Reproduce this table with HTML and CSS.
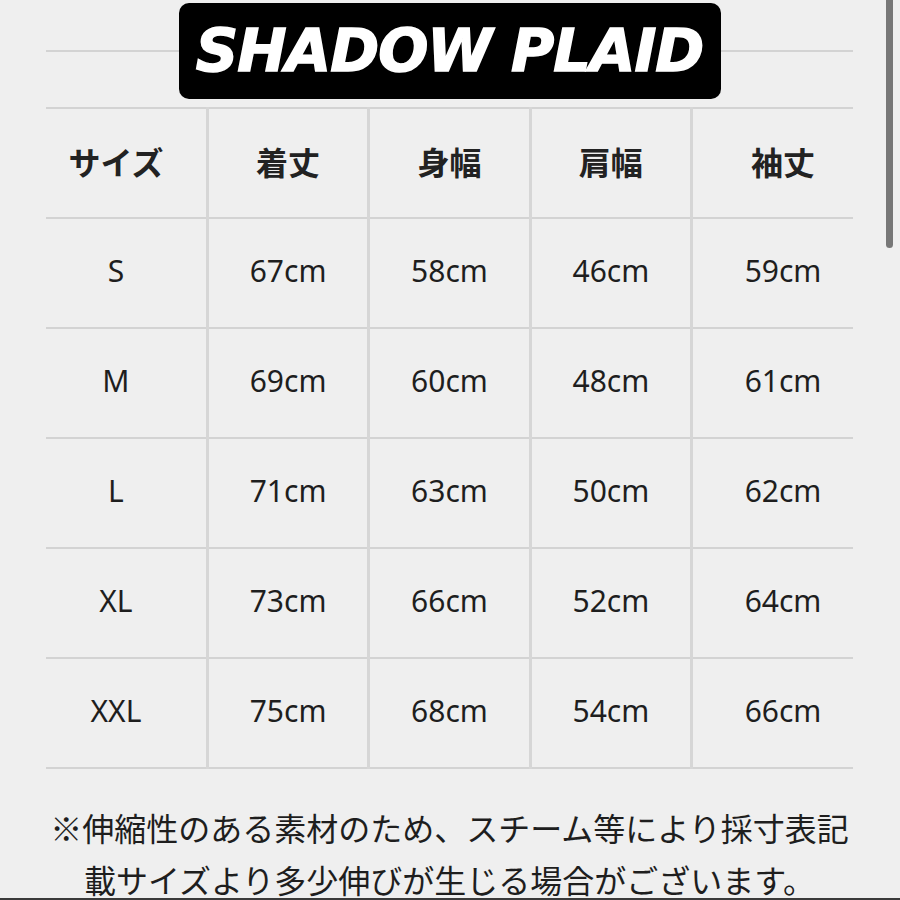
FILE: index.html
```html
<!DOCTYPE html>
<html lang="ja">
<head>
<meta charset="utf-8">
<title>SHADOW PLAID サイズ表</title>
<link rel="stylesheet" href="styles.css">
</head>
<body>
<div class="page">
  <div class="title-area">
    <div class="title-line"></div>
    <div class="banner"><span class="banner-text">SHADOW PLAID</span></div>
  </div>
  <table class="size-table">
    <thead>
      <tr><th>サイズ</th><th>着丈</th><th>身幅</th><th>肩幅</th><th>袖丈</th></tr>
    </thead>
    <tbody>
      <tr><td>S</td><td>67cm</td><td>58cm</td><td>46cm</td><td>59cm</td></tr>
      <tr><td>M</td><td>69cm</td><td>60cm</td><td>48cm</td><td>61cm</td></tr>
      <tr><td>L</td><td>71cm</td><td>63cm</td><td>50cm</td><td>62cm</td></tr>
      <tr><td>XL</td><td>73cm</td><td>66cm</td><td>52cm</td><td>64cm</td></tr>
      <tr><td>XXL</td><td>75cm</td><td>68cm</td><td>54cm</td><td>66cm</td></tr>
    </tbody>
  </table>
  <p class="note">※伸縮性のある素材のため、スチーム等により採寸表記<br>載サイズより多少伸びが生じる場合がございます。</p>
</div>
<div class="scroll-thumb"></div>
<div class="bottom-edge"></div>
</body>
</html>
```

FILE: styles.css
```css
html, body {
  margin: 0;
  padding: 0;
  overflow: hidden;
  height: 900px;
}
body {
  background: #efefef;
  color: #222;
  font-family: "Noto Sans", "Noto Sans CJK JP", sans-serif;
}
.page {
  width: 807px;
  margin-left: 46px;
}
.title-area {
  display: grid;
  padding-top: 3px;
  margin-bottom: 8px;
}
.title-line,
.banner {
  grid-area: 1 / 1;
}
.title-line {
  align-self: center;
  height: 2px;
  background: #d3d3d3;
}
.banner {
  justify-self: center;
  width: 542px;
  height: 96px;
  background: #000;
  border-radius: 10px;
  display: flex;
  align-items: center;
  justify-content: center;
}
.banner-text {
  color: #fff;
  font-family: "DejaVu Sans", "Roboto", sans-serif;
  font-weight: 700;
  font-style: italic;
  font-size: 59px;
  letter-spacing: -1px;
  line-height: 1;
  -webkit-text-stroke: 1.5px #fff;
  padding-bottom: 2px;
}
.size-table {
  width: 807px;
  border-collapse: collapse;
  table-layout: fixed;
}
.size-table th,
.size-table td {
  height: 103px;
  padding: 0 0 5px;
  text-align: center;
  vertical-align: middle;
  border-top: 2px solid #d3d3d3;
  border-bottom: 2px solid #d3d3d3;
  border-left: 3px solid #d6d6d6;
}
.size-table th:first-child,
.size-table td:first-child {
  border-left: none;
  padding-right: 20px;
}
.size-table th:last-child,
.size-table td:last-child {
  padding-left: 20px;
}
.size-table th {
  font-family: "Noto Sans CJK JP", sans-serif;
  font-weight: 700;
  font-size: 32px;
  color: #222;
}
.size-table td {
  font-size: 30px;
  font-weight: 400;
  color: #1e1e1e;
}
.note {
  margin: 32px 0 0;
  text-align: center;
  font-family: "Noto Sans CJK JP", sans-serif;
  font-size: 32px;
  line-height: 52px;
  color: #1e1e1e;
  white-space: nowrap;
}
.scroll-thumb {
  position: fixed;
  top: 0;
  right: 7px;
  width: 7px;
  height: 248px;
  background: #777;
  border-radius: 0 0 4px 4px;
}
.bottom-edge {
  position: fixed;
  left: 0;
  right: 0;
  bottom: 0;
  height: 2px;
  background: #3a3a3a;
}
```
